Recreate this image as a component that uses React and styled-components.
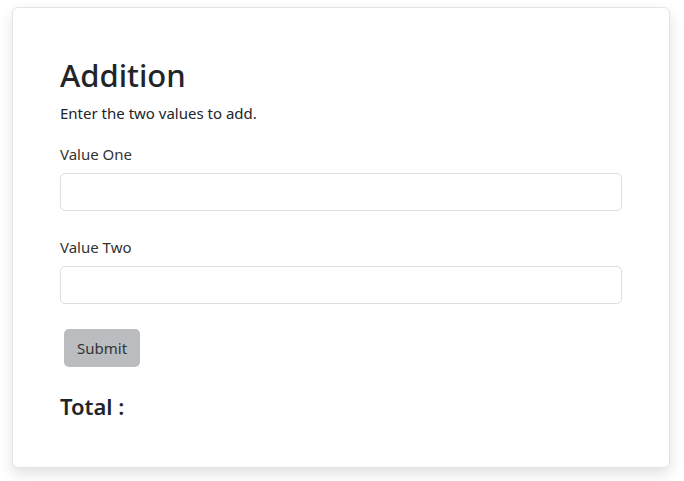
import React, { useState } from 'react';
import styled, { createGlobalStyle } from 'styled-components';

const GlobalStyle = createGlobalStyle`
    * { box-sizing: border-box; }
    body {
        margin: 0;
        background: #ffffff;
        font-family: "Noto Sans", "Open Sans", sans-serif;
        color: #212529;
    }
`;

const Page = styled.div`
    padding: 7px 14px 14px 12px;
`;

const Card = styled.div`
    width: 658px;
    background: #fff;
    border: 1px solid #e4e4e6;
    border-radius: 6px;
    box-shadow: 0 6px 14px rgba(0, 0, 0, 0.12);
    padding: 48px 47px 46px 47px;
`;

const Title = styled.h2`
    margin: 0 0 6px;
    font-size: 31px;
    font-weight: 500;
    line-height: 1.25;
`;

const Lead = styled.p`
    margin: 0 0 17px;
    font-size: 15px;
    line-height: 24px;
`;

const Field = styled.div`
    margin-bottom: 24px;
`;

const Label = styled.label`
    display: block;
    font-size: 15px;
    line-height: 24px;
    margin-bottom: 7px;
    color: #333;
`;

const Input = styled.input`
    display: block;
    width: 100%;
    height: 38px;
    border: 1px solid #dedfe2;
    border-radius: 5px;
    padding: 6px 12px;
    font: inherit;
    outline: none;
`;

const Button = styled.button`
    margin: 1px 0 0 4px;
    height: 38px;
    padding: 0 13px;
    border: none;
    border-radius: 5px;
    background: #bbbcc0;
    color: #333;
    font: inherit;
    font-size: 15px;
`;

const Total = styled.h4`
    margin: 25px 0 0;
    font-size: 22px;
    font-weight: 600;
    line-height: 29px;
`;

export default function App() {
    const [one, setOne] = useState('');
    const [two, setTwo] = useState('');
    const [total, setTotal] = useState('');

    function handleSubmit(e) {
        e.preventDefault();
        if (one === '' || two === '') return;
        setTotal(Number(one) + Number(two));
    }

    return (
        <Page>
            <GlobalStyle />
            <Card>
                <Title>Addition</Title>
                <Lead>Enter the two values to add.</Lead>
                <form onSubmit={handleSubmit}>
                    <Field>
                        <Label htmlFor="one">Value One</Label>
                        <Input id="one" value={one} onChange={e => setOne(e.target.value)} />
                    </Field>
                    <Field>
                        <Label htmlFor="two">Value Two</Label>
                        <Input id="two" value={two} onChange={e => setTwo(e.target.value)} />
                    </Field>
                    <Button type="submit">Submit</Button>
                </form>
                <Total>Total : {total}</Total>
            </Card>
        </Page>
    );
}
